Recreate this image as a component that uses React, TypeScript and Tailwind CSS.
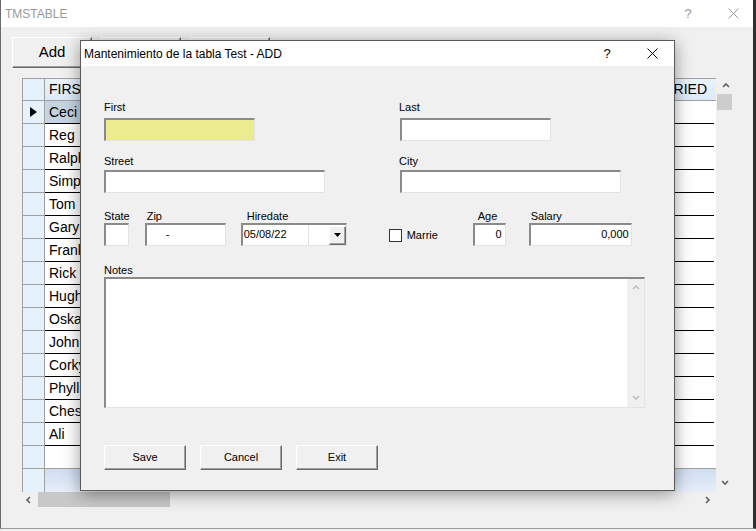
import React from "react";

const names: string[] = [
  "Ceci",
  "Reg",
  "Ralph",
  "Simpson",
  "Tom",
  "Gary",
  "Frank",
  "Rick",
  "Hugh",
  "Oskar",
  "John",
  "Corky",
  "Phyllis",
  "Chester",
  "Ali",
];

const sunken =
  "border-t-2 border-l-2 border-r border-b border-t-[#8a8a8a] border-l-[#8a8a8a] border-r-[#e3e3e3] border-b-[#e3e3e3]";
const raised =
  "bg-[#f0f0f0] border border-t-white border-l-white border-r-[#696969] border-b-[#696969] shadow-[inset_-1px_-1px_0_#a0a0a0]";
const label = "h-[13px] text-[11px] leading-[13px] text-black whitespace-nowrap";

const Chevron = ({ dir, color = "#606060" }: { dir: "up" | "down" | "left" | "right"; color?: string }) => {
  const pts: Record<string, string> = {
    up: "1,5 4,2 7,5",
    down: "1,2 4,5 7,2",
    left: "5,1 2,4 5,7",
    right: "2,1 5,4 2,7",
  };
  return (
    <svg width="8" height="8" viewBox="0 0 8 8">
      <polyline points={pts[dir]} fill="none" stroke={color} strokeWidth="1.6" />
    </svg>
  );
};

const CloseX = ({ color }: { color: string }) => (
  <svg width="11" height="11" viewBox="0 0 11 11">
    <path d="M0.5 0.5 L10.5 10.5 M10.5 0.5 L0.5 10.5" stroke={color} strokeWidth="1" />
  </svg>
);

const Dialog = () => (
  <div className="absolute left-[80px] top-[40px] w-[595px] h-[451px] border border-[#5a5a5a] bg-[#f0f0f0] flex flex-col shadow-[0_3px_16px_rgba(0,0,0,0.4)]">
    {/* title bar */}
    <div className="h-[25px] bg-white flex items-center">
      <span className="pl-[3px] text-[12px] text-black">Mantenimiento de la tabla Test - ADD</span>
      <div className="ml-auto w-[46px] text-center text-[13px] text-black">?</div>
      <div className="w-[44px] flex justify-center">
        <CloseX color="#000" />
      </div>
    </div>

    <div className="flex flex-col pl-[23px] pt-[35px]">
      {/* First / Last */}
      <div className="flex">
        <div className="w-[295px] flex flex-col">
          <div className={label}>First</div>
          <div className={`mt-[4px] h-[23px] w-[151px] ${sunken} bg-[#ebeb8f]`} />
        </div>
        <div className="flex flex-col">
          <div className={label}>Last</div>
          <div className={`mt-[4px] ml-[1px] h-[23px] w-[151px] bg-white ${sunken}`} />
        </div>
      </div>

      {/* Street / City */}
      <div className="flex mt-[14px]">
        <div className="w-[295px] flex flex-col">
          <div className={label}>Street</div>
          <div className={`mt-[2px] h-[23px] w-[221px] bg-white ${sunken}`} />
        </div>
        <div className="flex flex-col">
          <div className={label}>City</div>
          <div className={`mt-[2px] ml-[1px] h-[23px] w-[221px] bg-white ${sunken}`} />
        </div>
      </div>

      {/* State Zip Hiredate Marrie Age Salary */}
      <div className="flex items-end mt-[17px]">
        <div className="flex flex-col">
          <div className={label}>State</div>
          <div className={`${sunken} bg-white h-[23px] w-[25px]`} />
        </div>
        <div className="ml-[15px] flex flex-col">
          <div className={`${label} pl-[2px]`}>Zip</div>
          <div className={`${sunken} bg-white h-[23px] w-[81px] text-[11px] leading-[19px] pl-[19px]`}>-</div>
        </div>
        <div className="ml-[15px] flex flex-col">
          <div className={`${label} pl-[6px]`}>Hiredate</div>
          <div className={`${sunken} bg-white h-[23px] w-[106px] flex items-center`}>
            <span className="w-[66px] text-[11px] pl-[1px] border-r border-[#e3e3e3] h-full leading-[19px]">05/08/22</span>
            <div className="flex-1" />
            <div className={`${raised} w-[17px] h-[19px] flex items-center justify-center`}>
              <svg width="7" height="4" viewBox="0 0 7 4">
                <polygon points="0,0 7,0 3.5,4" fill="#000" />
              </svg>
            </div>
          </div>
        </div>
        <div className="ml-[42px] w-[84px] h-[23px] flex items-center self-end mb-[-1px]">
          <div className="w-[13px] h-[13px] bg-white border border-[#333]" />
          <span className="ml-[5px] text-[11px] text-black">Marrie</span>
        </div>
        <div className="flex flex-col">
          <div className={`${label} pl-[5px]`}>Age</div>
          <div className={`${sunken} bg-white h-[23px] w-[33px] text-[11px] leading-[19px] text-right pr-[3px]`}>0</div>
        </div>
        <div className="ml-[23px] flex flex-col">
          <div className={`${label} pl-[2px]`}>Salary</div>
          <div className={`${sunken} bg-white h-[23px] w-[103px] text-[11px] leading-[19px] text-right pr-[2px]`}>0,000</div>
        </div>
      </div>

      {/* Notes */}
      <div className="flex flex-col mt-[18px]">
        <div className={label}>Notes</div>
        <div className={`${sunken} bg-white w-[541px] h-[131px] flex`}>
          <div className="flex-1" />
          <div className="w-[17px] bg-[#f0f0f0] flex flex-col items-center justify-between py-[5px]">
            <Chevron dir="up" color="#c0c0c0" />
            <Chevron dir="down" color="#c0c0c0" />
          </div>
        </div>
      </div>

      {/* Buttons */}
      <div className="flex gap-[14px] mt-[37px]">
        {["Save", "Cancel", "Exit"].map((b) => (
          <div key={b} className={`${raised} w-[82px] h-[25px] flex items-center justify-center text-[11px] text-black`}>
            {b}
          </div>
        ))}
      </div>
    </div>
  </div>
);

const Grid = () => (
  <div className="ml-[21px] mt-[10px] flex flex-col">
    <div className="flex">
      <div className="w-[694px] h-[414px] flex flex-col bg-white text-[14px] text-black">
        {/* header */}
        <div className="h-[23px] flex">
          <div className="w-[23px] bg-[#e5f1fb] border-t border-l border-r border-b border-[#a0a0a0]" />
          <div className="flex-1 flex justify-between items-center bg-gradient-to-b from-[#eaf3fc] to-[#dce9f8] border-b border-t border-[#a0a0a0]">
            <span className="pl-[4px]">FIRST</span>
            <span className="pr-[9px]">MARRIED</span>
          </div>
        </div>
        {/* rows */}
        {names.map((n, i) => (
          <div key={n} className="h-[23px] flex">
            <div className="w-[23px] bg-[#e5f1fb] border-l border-r border-b border-[#a0a0a0] flex items-center justify-center">
              {i === 0 && (
                <svg width="7" height="10" viewBox="0 0 7 10">
                  <polygon points="0,0 7,5 0,10" fill="#000" />
                </svg>
              )}
            </div>
            <div className="flex-1 flex border-b border-black mr-[2px]">
              <div className={`w-[110px] pl-[4px] leading-[22px] ${i === 0 ? "bg-[#c6d3e2]" : ""}`}>{n}</div>
            </div>
          </div>
        ))}
        {/* empty new row */}
        <div className="h-[23px] flex">
          <div className="w-[23px] bg-[#e5f1fb] border-l border-r border-b border-[#a0a0a0]" />
          <div className="flex-1 border-b border-[#a0a0a0]" />
        </div>
        {/* footer */}
        <div className="h-[23px] flex">
          <div className="w-[23px] bg-[#e5f1fb] border-l border-r border-[#a0a0a0]" />
          <div className="flex-1 bg-gradient-to-b from-[#cfdef1] to-[#e6eef9]" />
        </div>
      </div>
      {/* vertical scrollbar */}
      <div className="w-[17px] h-[414px] flex flex-col items-center">
        <div className="mt-[4px] ml-[3px]">
          <Chevron dir="up" />
        </div>
        <div className="mt-[4px] w-[15px] h-[16px] bg-[#cdcdcd]" />
        <div className="flex-1" />
        <div className="mb-[5px]">
          <Chevron dir="down" />
        </div>
      </div>
    </div>
    {/* horizontal scrollbar */}
    <div className="w-[694px] h-[15px] flex items-center">
      <div className="ml-[3px]">
        <Chevron dir="left" />
      </div>
      <div className="ml-[5px] w-[132px] h-[15px] bg-[#c8c8c8]" />
      <div className="flex-1" />
      <div className="mr-[4px]">
        <Chevron dir="right" />
      </div>
    </div>
  </div>
);

export default function App() {
  return (
    <div className="w-[756px] h-[531px] bg-[#f0f0f0] relative overflow-hidden font-['Liberation_Sans',Arial,sans-serif]">
      <div className="w-[756px] h-[529px] border-r-[3px] border-r-[#2f2f2f] border-l border-l-[#6a6a6a] border-b border-b-[#9a9a9a] flex flex-col">
        {/* main title bar */}
        <div className="h-[27px] bg-white flex items-center shrink-0">
          <span className="pl-[4px] text-[12px] text-[#9a9a9a]">TMSTABLE</span>
          <div className="ml-auto w-[50px] text-center text-[13px] text-[#9a9a9a]">?</div>
          <div className="w-[40px] flex justify-center">
            <CloseX color="#9a9a9a" />
          </div>
        </div>
        {/* toolbar: only the first caption shows, the rest lie under the dialog */}
        <div className="flex gap-[9px] pl-[11px] pt-[10px]">
          <div className={`${raised} w-[80px] h-[31px] flex items-center justify-center text-[15px] text-black`}>Add</div>
          <div className={`${raised} w-[80px] h-[31px]`} />
          <div className={`${raised} w-[80px] h-[31px]`} />
        </div>
        <Grid />
      </div>
      <Dialog />
    </div>
  );
}
